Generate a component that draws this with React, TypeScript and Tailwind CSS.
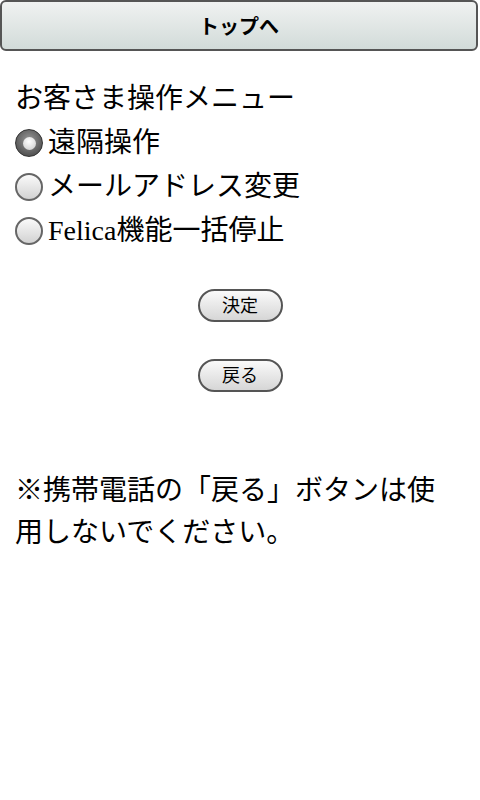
import React, { useState } from 'react';

const OPTIONS = ['遠隔操作', 'メールアドレス変更', 'Felica機能一括停止'];

function Radio({ checked }: { checked: boolean }) {
  if (checked) {
    return (
      <span className="flex h-[28px] w-[28px] shrink-0 items-center justify-center rounded-full border border-[#333] bg-[radial-gradient(circle_at_50%_40%,#9a9a9a,#3a3a3a)]">
        <span className="h-[13px] w-[13px] rounded-full bg-[radial-gradient(circle_at_45%_35%,#ffffff,#c8c8c8)]" />
      </span>
    );
  }
  return (
    <span className="h-[28px] w-[28px] shrink-0 rounded-full border-2 border-[#666] bg-[linear-gradient(#fafafa,#d2d2d2)]" />
  );
}

export default function App() {
  const [selected, setSelected] = useState(0);

  return (
    <div
      className="h-[800px] w-[480px] bg-white text-black"
      style={{ fontFamily: '"Liberation Serif", "Noto Sans CJK JP", serif' }}
    >
      <div className="flex h-[51px] w-[478px] items-center justify-center rounded-[6px] border-2 border-[#555] bg-[linear-gradient(#f0f2f1,#d2dbd9)]">
        <span
          className="text-[20px] font-bold"
          style={{ fontFamily: '"Noto Sans CJK JP", sans-serif' }}
        >
          トップへ
        </span>
      </div>

      <div className="px-[15px] pt-[26px]">
        <p className="text-[28px] leading-[44px]">お客さま操作メニュー</p>
        {OPTIONS.map((label, i) => (
          <label
            key={label}
            className="flex h-[44px] items-center gap-[5px] text-[28px]"
            onClick={() => setSelected(i)}
          >
            <Radio checked={selected === i} />
            <span>{label}</span>
          </label>
        ))}
      </div>

      <div className="mt-[36px] flex flex-col items-center gap-[37px]">
        <button className="h-[33px] w-[85px] rounded-full border-2 border-[#555] bg-[linear-gradient(#fafafa,#d6d6d6)] text-[18px] leading-none">
          決定
        </button>
        <button className="h-[33px] w-[85px] rounded-full border-2 border-[#555] bg-[linear-gradient(#fafafa,#d6d6d6)] text-[18px] leading-none">
          戻る
        </button>
      </div>

      <p className="mt-[78px] w-[440px] px-[15px] text-[28px] leading-[42px] box-content">
        <span className="font-bold">※</span>携帯電話の「戻る」ボタンは使用しないでください。
      </p>
    </div>
  );
}
